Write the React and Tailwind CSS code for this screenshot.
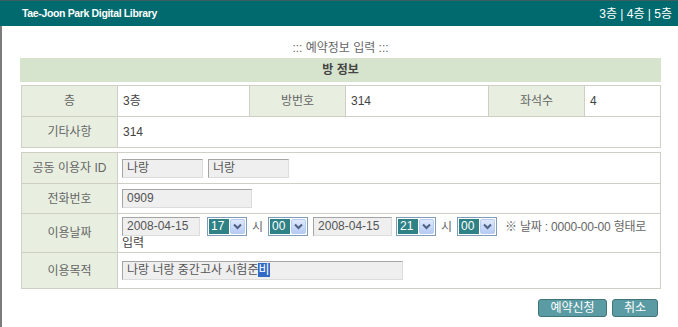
import React from 'react';

const font = { fontFamily: '"Liberation Sans", "Noto Sans CJK KR", sans-serif' };

const Field = ({ value, w, selected }) => (
  <div
    className={`h-[19px] ${w} border border-[#a5a5a5] border-r-[#dcdcdc] border-b-[#dcdcdc] bg-[#efefef] px-[4px] text-[12px] leading-[17px] text-[#555] whitespace-nowrap`}
  >
    {value}
    {selected && <span className="bg-[#316ac5] text-white">{selected}</span>}
  </div>
);

const Select = ({ value }) => (
  <div className="flex h-[19px] w-[40px] items-stretch border border-[#7f9db9] bg-white p-[1px]">
    <div className="flex-1 bg-[#2e8185] text-[12px] leading-[15px] text-white pl-[2px]">{value}</div>
    <div className="ml-[1px] flex w-[15px] items-center justify-center rounded-[2px] border border-[#b8ccf0] bg-gradient-to-b from-[#dfe9fd] to-[#b7cbf3]">
      <svg width="9" height="7" viewBox="0 0 9 7">
        <path d="M1 1.5 L4.5 5 L8 1.5" fill="none" stroke="#4d6185" strokeWidth="2" />
      </svg>
    </div>
  </div>
);

const Label = ({ children, className = '' }) => (
  <td className={`w-[96px] border border-[#cfcfc6] bg-[#e8efe1] text-center text-[12px] text-[#666] ${className}`}>
    {children}
  </td>
);

export default function App() {
  return (
    <div className="w-[678px] h-[327px] overflow-hidden bg-white" style={font}>
      <div className="flex h-[26px] items-center justify-between border-t border-[#3e5f60] bg-[#006a6e] pl-[22px] pr-[6px] text-white">
        <span className="text-[10.5px] font-bold tracking-[-0.35px]">Tae-Joon Park Digital Library</span>
        <span className="text-[12px]">3층 | 4층 | 5층</span>
      </div>
      <div className="h-[301px] border-l-2 border-[#7c7c7c] pl-[18px]">
        <div className="w-[641px]">
          <div className="pt-[14px] pb-[2px] text-center text-[12px] leading-[16px] text-[#666]">::: 예약정보 입력 :::</div>
          <div className="h-[24px] bg-[#d7e4cd] text-center text-[12px] font-bold leading-[24px] text-[#444]">방 정보</div>
          <table className="mt-[3px] ml-[1px] w-[640px] border-collapse text-[12px] text-[#444]">
            <tbody>
              <tr className="h-[31px]">
                <Label>층</Label>
                <td className="w-[132px] border border-[#cfcfc6] pl-[5px]">3층</td>
                <Label>방번호</Label>
                <td className="w-[143px] border border-[#cfcfc6] pl-[5px]">314</td>
                <Label>좌석수</Label>
                <td className="border border-[#cfcfc6] pl-[5px]">4</td>
              </tr>
              <tr className="h-[31px]">
                <Label>기타사항</Label>
                <td colSpan={5} className="border border-[#cfcfc6] pl-[5px]">314</td>
              </tr>
            </tbody>
          </table>
          <table className="mt-[4px] ml-[1px] w-[640px] border-collapse text-[12px] text-[#444]">
            <tbody>
              <tr className="h-[31px]">
                <Label>공동 이용자 ID</Label>
                <td className="border border-[#cfcfc6] pl-[4px]">
                  <div className="flex gap-[5px]">
                    <Field value="나랑" w="w-[81px]" />
                    <Field value="너랑" w="w-[81px]" />
                  </div>
                </td>
              </tr>
              <tr className="h-[30px]">
                <Label>전화번호</Label>
                <td className="border border-[#cfcfc6] pl-[4px]">
                  <Field value="0909" w="w-[130px]" />
                </td>
              </tr>
              <tr className="h-[37px]">
                <Label>이용날짜</Label>
                <td className="border border-[#cfcfc6] pl-[4px] pt-[3px] pb-[2px] align-top leading-[14px]">
                  <div className="flex items-center">
                    <Field value="2008-04-15" w="w-[78px]" />
                    <div className="ml-[7px]"><Select value="17" /></div>
                    <span className="mx-[5px] text-[#666]">시</span>
                    <Select value="00" />
                    <div className="ml-[5px]"><Field value="2008-04-15" w="w-[79px]" /></div>
                    <div className="ml-[4px]"><Select value="21" /></div>
                    <span className="mx-[5px] text-[#666]">시</span>
                    <Select value="00" />
                    <span className="ml-[8px] text-[#666] whitespace-nowrap tracking-[-0.2px]">※ 날짜 : 0000-00-00 형태로</span>
                  </div>
                  <div className="text-[#444]">입력</div>
                </td>
              </tr>
              <tr className="h-[36px]">
                <Label>이용목적</Label>
                <td className="border border-[#cfcfc6] pl-[4px]">
                  <Field value="나랑 너랑 중간고사 시험준" selected="비" w="w-[281px]" />
                </td>
              </tr>
            </tbody>
          </table>
          <div className="mt-[10px] flex justify-end gap-[5px] pr-[3px]">
            <button className="h-[18px] w-[69px] rounded-[3px] border border-[#3f7479] bg-[#5b9ba3] text-[12px] leading-[16px] text-white">예약신청</button>
            <button className="h-[18px] w-[46px] rounded-[3px] border border-[#3f7479] bg-[#5b9ba3] text-[12px] leading-[16px] text-white">취소</button>
          </div>
        </div>
      </div>
    </div>
  );
}
